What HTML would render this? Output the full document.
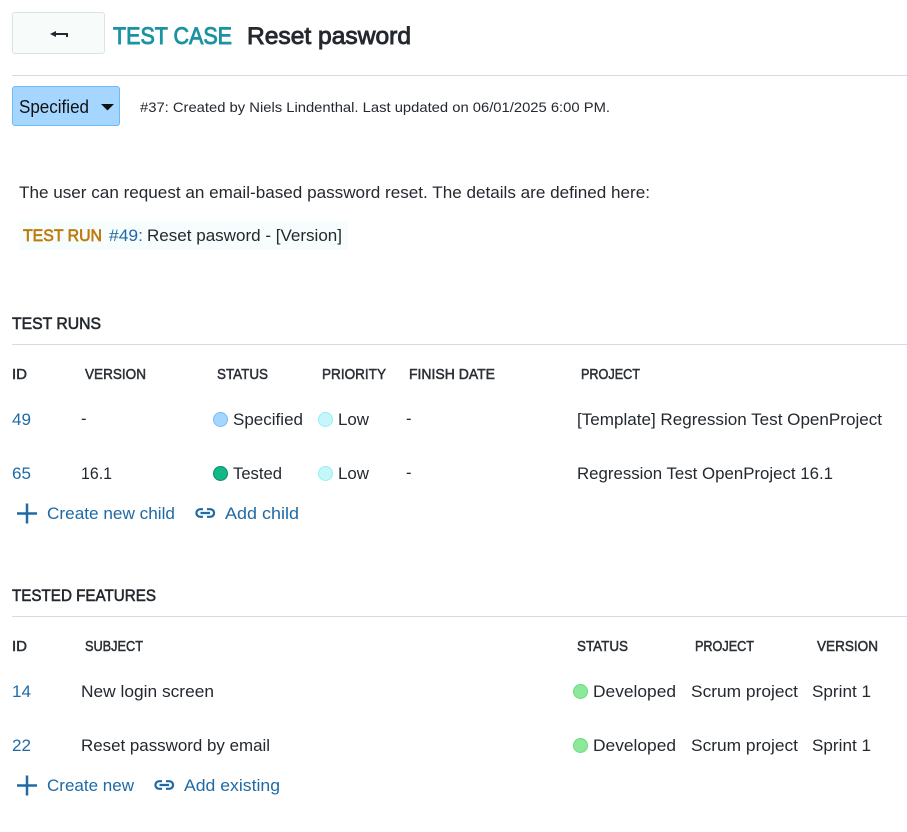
<!DOCTYPE html>
<html><head><meta charset="utf-8"><style>
html,body{margin:0;padding:0;background:#fff;width:907px;height:832px;overflow:hidden}
svg{display:block;font-family:"Liberation Sans",sans-serif}
text{fill:#24292f;font-size:16.5px}
.h{font-size:14.5px;fill:#2b3036;stroke:#2b3036;stroke-width:.5px}
.s{font-size:17px;fill:#24292f;stroke:#24292f;stroke-width:.6px}
.l{fill:#1f6aa5}
</style></head><body>
<svg width="907" height="832" viewBox="0 0 907 832" xmlns="http://www.w3.org/2000/svg">
<rect x="12.5" y="12.5" width="92" height="41" rx="2.5" fill="#f7fbfa" stroke="#dbe2e8"/>
<path d="M50 34L56 31V37Z" fill="#24292f"/><path d="M56 33H68V37H66V35H56Z" fill="#24292f"/>
<text x="113" y="44" textLength="119" lengthAdjust="spacingAndGlyphs" style="font-size:24.5px;fill:#1a93a3;stroke:#1a93a3;stroke-width:.9px">TEST CASE</text>
<text x="247" y="44" textLength="164" lengthAdjust="spacingAndGlyphs" style="font-size:24.5px;fill:#24292f;stroke:#24292f;stroke-width:.9px">Reset pasword</text>
<rect x="12" y="75" width="895" height="1" fill="#d3dce3"/>
<rect x="12.500" y="86.500" width="107" height="39" rx="2.500" fill="#a5d6ff" stroke="#6fb9f5"/>
<text x="19" y="113" textLength="70" lengthAdjust="spacingAndGlyphs" style="font-size:18px;fill:#111">Specified</text>
<path d="M101 104H114L107.500 110.500Z" fill="#111"/>
<text x="140" y="112" textLength="470" lengthAdjust="spacingAndGlyphs" style="font-size:14px">#37: Created by Niels Lindenthal. Last updated on 06/01/2025 6:00 PM.</text>
<text x="19" y="198" textLength="631" lengthAdjust="spacingAndGlyphs" style="font-size:17px">The user can request an email-based password reset. The details are defined here:</text>
<rect x="19" y="221" width="329" height="29" fill="#f7fcfc"/>
<text x="23" y="241" textLength="79" lengthAdjust="spacingAndGlyphs" style="font-size:16.5px;fill:#bf7b0c;stroke:#bf7b0c;stroke-width:.65px">TEST RUN</text>
<text x="109" y="241" textLength="34" lengthAdjust="spacingAndGlyphs" class="l">#49:</text>
<text x="147" y="241" textLength="195" lengthAdjust="spacingAndGlyphs">Reset pasword - [Version]</text>

<text class="s" x="12" y="329" textLength="89" lengthAdjust="spacingAndGlyphs">TEST RUNS</text>
<rect x="12" y="344" width="895" height="1" fill="#d3dce3"/>
<text class="h" x="12" y="379" textLength="15" lengthAdjust="spacingAndGlyphs">ID</text>
<text class="h" x="85" y="379" textLength="61" lengthAdjust="spacingAndGlyphs">VERSION</text>
<text class="h" x="217" y="379" textLength="51" lengthAdjust="spacingAndGlyphs">STATUS</text>
<text class="h" x="322" y="379" textLength="64" lengthAdjust="spacingAndGlyphs">PRIORITY</text>
<text class="h" x="409" y="379" textLength="86" lengthAdjust="spacingAndGlyphs">FINISH DATE</text>
<text class="h" x="581" y="379" textLength="59" lengthAdjust="spacingAndGlyphs">PROJECT</text>

<text class="l" x="12" y="425" textLength="19" lengthAdjust="spacingAndGlyphs">49</text>
<text x="81" y="424">-</text>
<circle cx="220.500" cy="419.500" r="7" fill="#a5d6ff" stroke="#74bdf7"/>
<text x="233" y="425" textLength="70" lengthAdjust="spacingAndGlyphs">Specified</text>
<circle cx="325.500" cy="419.500" r="7" fill="#c5f6fa" stroke="#96eef5"/>
<text x="338" y="425" textLength="31" lengthAdjust="spacingAndGlyphs">Low</text>
<text x="406" y="424">-</text>
<text x="577" y="425" textLength="305" lengthAdjust="spacingAndGlyphs">[Template] Regression Test OpenProject</text>

<text class="l" x="12" y="479" textLength="19" lengthAdjust="spacingAndGlyphs">65</text>
<text x="81" y="479" textLength="31" lengthAdjust="spacingAndGlyphs">16.1</text>
<circle cx="220.500" cy="473.500" r="7" fill="#12b886" stroke="#0a8a64"/>
<text x="233" y="479" textLength="49" lengthAdjust="spacingAndGlyphs">Tested</text>
<circle cx="325.500" cy="473.500" r="7" fill="#c5f6fa" stroke="#96eef5"/>
<text x="338" y="479" textLength="31" lengthAdjust="spacingAndGlyphs">Low</text>
<text x="406" y="478">-</text>
<text x="577" y="479" textLength="256" lengthAdjust="spacingAndGlyphs">Regression Test OpenProject 16.1</text>

<path d="M17 513.500H37M27 503.500V523.500" stroke="#1f6aa5" stroke-width="2.500" fill="none"/>
<text class="l" x="47" y="519" textLength="128" lengthAdjust="spacingAndGlyphs">Create new child</text>
<g fill="none" stroke="#1f6aa5" stroke-width="2.200"><path d="M203 509.200H200.200A3.800 3.800 0 0 0 200.200 516.800H203M207 509.200H210.300A3.800 3.800 0 0 1 210.300 516.800H207M200.500 513H210"/></g>
<text class="l" x="225" y="519" textLength="74" lengthAdjust="spacingAndGlyphs">Add child</text>

<text class="s" x="12" y="601" textLength="144" lengthAdjust="spacingAndGlyphs">TESTED FEATURES</text>
<rect x="12" y="616" width="895" height="1" fill="#d3dce3"/>
<text class="h" x="12" y="651" textLength="15" lengthAdjust="spacingAndGlyphs">ID</text>
<text class="h" x="85" y="651" textLength="58" lengthAdjust="spacingAndGlyphs">SUBJECT</text>
<text class="h" x="577" y="651" textLength="51" lengthAdjust="spacingAndGlyphs">STATUS</text>
<text class="h" x="695" y="651" textLength="59" lengthAdjust="spacingAndGlyphs">PROJECT</text>
<text class="h" x="817" y="651" textLength="61" lengthAdjust="spacingAndGlyphs">VERSION</text>

<text class="l" x="12" y="697" textLength="19" lengthAdjust="spacingAndGlyphs">14</text>
<text x="81" y="697" textLength="133" lengthAdjust="spacingAndGlyphs">New login screen</text>
<circle cx="580.500" cy="691.500" r="7" fill="#8ce99a" stroke="#69db7c"/>
<text x="593" y="697" textLength="83" lengthAdjust="spacingAndGlyphs">Developed</text>
<text x="691" y="697" textLength="107" lengthAdjust="spacingAndGlyphs">Scrum project</text>
<text x="812" y="697" textLength="59" lengthAdjust="spacingAndGlyphs">Sprint 1</text>

<text class="l" x="12" y="751" textLength="19" lengthAdjust="spacingAndGlyphs">22</text>
<text x="81" y="751" textLength="189" lengthAdjust="spacingAndGlyphs">Reset password by email</text>
<circle cx="580.500" cy="745.500" r="7" fill="#8ce99a" stroke="#69db7c"/>
<text x="593" y="751" textLength="83" lengthAdjust="spacingAndGlyphs">Developed</text>
<text x="691" y="751" textLength="107" lengthAdjust="spacingAndGlyphs">Scrum project</text>
<text x="812" y="751" textLength="59" lengthAdjust="spacingAndGlyphs">Sprint 1</text>

<path d="M17 785.500H37M27 775.500V795.500" stroke="#1f6aa5" stroke-width="2.500" fill="none"/>
<text class="l" x="47" y="791" textLength="87" lengthAdjust="spacingAndGlyphs">Create new</text>
<g fill="none" stroke="#1f6aa5" stroke-width="2.200"><path d="M162 781.200H159.200A3.800 3.800 0 0 0 159.200 788.800H162M166 781.200H169.300A3.800 3.800 0 0 1 169.300 788.800H166M159.500 785H169"/></g>
<text class="l" x="184" y="791" textLength="96" lengthAdjust="spacingAndGlyphs">Add existing</text>
</svg>
</body></html>
